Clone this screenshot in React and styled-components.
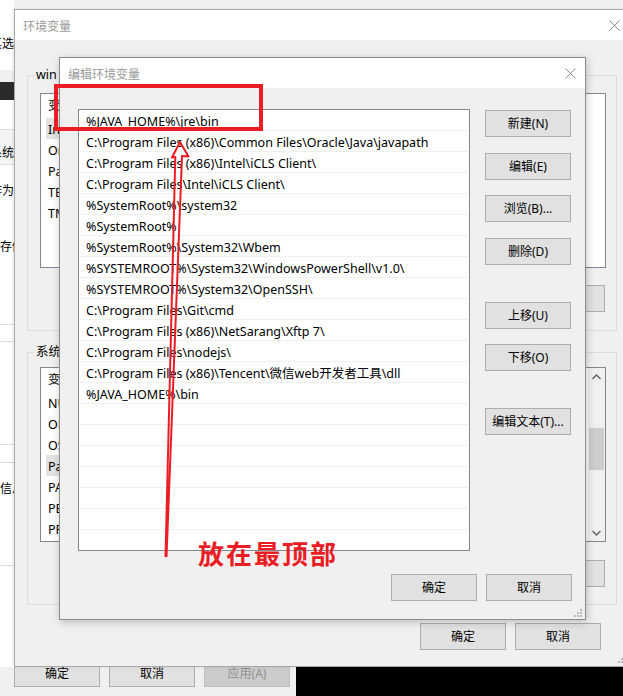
import React from 'react';
import styled, { createGlobalStyle } from 'styled-components';

const GlobalStyle = createGlobalStyle`
  html, body {
    margin: 0;
    padding: 0;
    background: #f0f0f0;
  }
  body {
    font-family: "Noto Sans", "Noto Sans CJK SC", sans-serif;
    font-size: 12px;
    color: #000;
  }
  * {
    box-sizing: border-box;
  }
`;

const Screen = styled.div`
  position: relative;
  width: 623px;
  height: 696px;
  overflow: hidden;
  display: flex;
  flex-direction: column;
  background: #f0f0f0;
`;

const Desk = styled.div`
  display: flex;
  height: 667px;
  flex-shrink: 0;
`;

// strip of the window lying behind, only 14px of it shows
const Strip = styled.div`
  width: 14px;
  flex-shrink: 0;
  display: flex;
  flex-direction: column;
  background: #fff;
  overflow: hidden;
`;

const StripCell = styled.div`
  height: ${p => p.$h}px;
  flex-shrink: 0;
  background: ${p => p.$bg || 'transparent'};
  border-bottom: ${p => (p.$line ? '1px solid #dcdcdc' : 'none')};
  padding-top: ${p => p.$top || 0}px;
  display: flex;
  justify-content: ${p => (p.$right ? 'flex-end' : 'flex-start')};
  align-items: flex-start;
  overflow: hidden;
  font-family: "Noto Sans CJK SC", sans-serif;
  line-height: 14px;
  span {
    flex-shrink: 0;
    white-space: nowrap;
  }
`;

const EnvWindow = styled.div`
  position: relative;
  margin-top: 9px;
  width: 617px;
  height: 658px;
  flex-shrink: 0;
  border: 1px solid #a8a8a8;
  background: #f0f0f0;
  display: flex;
  flex-direction: column;
  box-shadow: -1px 0 3px rgba(0, 0, 0, 0.1);
`;

const TitleBar = styled.div`
  height: 30px;
  flex-shrink: 0;
  background: #fff;
  display: flex;
  align-items: center;
  justify-content: space-between;
  padding: 0 ${p => p.$padRight}px 0 8px;
  color: #9a9a9a;
  font-family: "Noto Sans CJK SC", sans-serif;
`;

const CloseIcon = () => (
  <svg width="11" height="11" viewBox="0 0 11 11">
    <path d="M0.5 0.5 L10.5 10.5 M10.5 0.5 L0.5 10.5" stroke="#8a8a8a" strokeWidth="1" />
  </svg>
);

const EnvBody = styled.div`
  flex: 1;
  display: flex;
  flex-direction: column;
  padding: 27px 13px 16px 12px;
`;

const Group = styled.fieldset`
  margin: ${p => p.$top}px 0 0 0;
  padding: 0;
  border: 1px solid #dcdcdc;
  min-inline-size: 0;
`;

const GroupTitle = styled.legend`
  margin-left: 6px;
  padding: 0 2px;
  line-height: 16px;
  font-size: 12.5px;
  font-family: "Noto Sans", "Noto Sans CJK SC", sans-serif;
`;

const GroupBody = styled.div`
  padding: ${p => p.$padTop}px 10px ${p => p.$padBottom}px 12px;
  display: flex;
  flex-direction: column;
`;

const VarList = styled.div`
  height: 175px;
  display: flex;
  background: #fff;
  border: 1px solid #828790;
  overflow: hidden;
`;

const VarRows = styled.div`
  flex: 1;
  display: flex;
  flex-direction: column;
`;

const VarRow = styled.div`
  height: ${p => (p.$head ? 24 : 21)}px;
  flex-shrink: 0;
  margin-left: 5px;
  width: 180px;
  padding: 3px 0 0 2px;
  font-size: 12.5px;
  line-height: 17px;
  white-space: nowrap;
  overflow: hidden;
  background: ${p => (p.$selected ? '#e3e3e3' : 'transparent')};
`;

const ScrollBar = styled.div`
  width: 17px;
  flex-shrink: 0;
  display: flex;
  flex-direction: column;
  background: #f0f0f0;
`;

const ScrollArrow = styled.div`
  height: 17px;
  display: flex;
  align-items: center;
  justify-content: center;
`;

const ScrollTrack = styled.div`
  flex: 1;
  padding: 43px 1px 0;
`;

const Thumb = styled.div`
  height: 42px;
  background: #cdcdcd;
`;

const Chevron = ({ down }) => (
  <svg width="9" height="6" viewBox="0 0 9 6">
    <path d={down ? 'M0.5 1 L4.5 5 L8.5 1' : 'M0.5 5 L4.5 1 L8.5 5'} fill="none" stroke="#606060" strokeWidth="1.3" />
  </svg>
);

const ButtonRow = styled.div`
  display: flex;
  justify-content: flex-end;
  gap: 9px;
  margin-top: ${p => p.$top}px;
  padding-right: ${p => p.$right || 0}px;
`;

const Btn = styled.button`
  width: 86px;
  height: 27px;
  flex-shrink: 0;
  margin: ${p => p.$mt || 0}px 0 0 0;
  padding: 0;
  background: ${p => (p.disabled ? '#cccccc' : '#e1e1e1')};
  border: 1px solid ${p => (p.disabled ? '#bfbfbf' : '#adadad')};
  color: ${p => (p.disabled ? '#8f8f8f' : '#000')};
  font-family: "Noto Sans", "Noto Sans CJK SC", sans-serif;
  font-size: 12px;
  line-height: 25px;
  text-align: center;
`;

const Grip = styled.svg`
  position: absolute;
  right: ${p => p.$right}px;
  bottom: ${p => p.$bottom}px;
`;

const GripIcon = ({ right, bottom }) => (
  <Grip $right={right} $bottom={bottom} width="8" height="8" viewBox="0 0 8 8">
    <g fill="#b9b9b9">
      <rect x="6" y="0" width="2" height="2" />
      <rect x="3" y="3" width="2" height="2" />
      <rect x="6" y="3" width="2" height="2" />
      <rect x="0" y="6" width="2" height="2" />
      <rect x="3" y="6" width="2" height="2" />
      <rect x="6" y="6" width="2" height="2" />
    </g>
  </Grip>
);

const Taskbar = styled.div`
  display: flex;
  height: 29px;
  flex-shrink: 0;
  overflow: hidden;
`;

const BackButtons = styled.div`
  display: flex;
  gap: 9px;
  padding-left: 14px;
  width: 296px;
  flex-shrink: 0;
  align-items: flex-start;
  & > button {
    margin-top: -7px;
  }
`;

const Blackout = styled.div`
  flex: 1;
  background: #000;
`;

/* the edit dialog sits over the environment window */
const EditDialog = styled.div`
  position: absolute;
  left: 59px;
  top: 57px;
  width: 527px;
  height: 563px;
  display: flex;
  flex-direction: column;
  background: #f0f0f0;
  border: 1px solid #8c8c8c;
  box-shadow: 1px 2px 8px rgba(0, 0, 0, 0.22);
`;

const EditBody = styled.div`
  flex: 1;
  display: flex;
  flex-direction: column;
  padding: 21px 13px 18px 18px;
`;

const EditMain = styled.div`
  display: flex;
  gap: 15px;
`;

const PathList = styled.div`
  width: 392px;
  height: 442px;
  display: flex;
  flex-direction: column;
  background: #fff;
  border: 1px solid #828790;
  overflow: hidden;
`;

const PathRow = styled.div`
  height: 21px;
  flex-shrink: 0;
  padding: 3px 0 0 7px;
  font-size: 12.5px;
  line-height: 17px;
  white-space: nowrap;
  border-bottom: 1px solid #f0f0f0;
`;

const SideButtons = styled.div`
  display: flex;
  flex-direction: column;
`;

const Markup = styled.svg`
  position: absolute;
  left: 0;
  top: 0;
  pointer-events: none;
`;

const Callout = styled.div`
  position: absolute;
  left: 198px;
  top: 539px;
  font-family: "Noto Sans CJK SC", sans-serif;
  font-weight: 700;
  font-size: 26px;
  line-height: 28px;
  letter-spacing: 2px;
  color: #ec1c24;
  white-space: nowrap;
`;

const stripCells = [
  { h: 70, text: '其选', top: 36, right: true },
  { h: 12, bg: '#f0f0f0' },
  { h: 18, bg: '#2b2b2b' },
  { h: 30, line: true },
  { h: 35, bg: '#f4f4f4', text: '系统', top: 15, right: true, line: true },
  { h: 60, text: '作为', top: 18, right: true },
  { h: 100, text: '存储', top: 14, line: true },
  { h: 17, line: true },
  { h: 103, line: true },
  { h: 18, line: true },
  { h: 103, text: '信息', top: 18, line: true },
  { h: 100 },
];

const userVars = ['IntelliJ IDEA', 'OneDrive', 'Path', 'TEMP', 'TMP'];
const sysVars = ['NUMBER_OF_PROCESSORS', 'ONEAPI_ROOT', 'OS', 'Path', 'PATHEXT', 'PERL5LIB', 'PROCESSOR_ARCHITECTURE'];

const paths = [
  '%JAVA_HOME%\\jre\\bin',
  'C:\\Program Files (x86)\\Common Files\\Oracle\\Java\\javapath',
  'C:\\Program Files (x86)\\Intel\\iCLS Client\\',
  'C:\\Program Files\\Intel\\iCLS Client\\',
  '%SystemRoot%\\system32',
  '%SystemRoot%',
  '%SystemRoot%\\System32\\Wbem',
  '%SYSTEMROOT%\\System32\\WindowsPowerShell\\v1.0\\',
  '%SYSTEMROOT%\\System32\\OpenSSH\\',
  'C:\\Program Files\\Git\\cmd',
  'C:\\Program Files (x86)\\NetSarang\\Xftp 7\\',
  'C:\\Program Files\\nodejs\\',
  'C:\\Program Files (x86)\\Tencent\\微信web开发者工具\\dll',
  '%JAVA_HOME%\\bin',
];

const sideButtons = [
  { label: '新建(N)', mt: 1 },
  { label: '编辑(E)', mt: 16 },
  { label: '浏览(B)...', mt: 15 },
  { label: '删除(D)', mt: 16 },
  { label: '上移(U)', mt: 37 },
  { label: '下移(O)', mt: 15 },
  { label: '编辑文本(T)...', mt: 37 },
];

const App = () => {
  const rows = [...paths];
  while (rows.length < 21) rows.push('');

  return (
    <Screen>
      <GlobalStyle />
      <Desk>
        <Strip>
          {stripCells.map((c, i) => (
            <StripCell key={i} $h={c.h} $bg={c.bg} $line={c.line} $top={c.top} $right={c.right}>
              {c.text && <span>{c.text}</span>}
            </StripCell>
          ))}
        </Strip>

        <EnvWindow>
          <TitleBar $padRight={10}>
            <span>环境变量</span>
            <CloseIcon />
          </TitleBar>
          <EnvBody>
            <Group $top={0}>
              <GroupTitle>win 的用户变量(U)</GroupTitle>
              <GroupBody $padTop={10} $padBottom={18}>
                <VarList>
                  <VarRows>
                    <VarRow $head>变量</VarRow>
                    {userVars.map((v, i) => (
                      <VarRow key={v} $selected={i === 0}>{v}</VarRow>
                    ))}
                  </VarRows>
                </VarList>
                <ButtonRow $top={17} $right={1}>
                  <Btn>新建(N)...</Btn>
                  <Btn>编辑(E)...</Btn>
                  <Btn>删除(D)</Btn>
                </ButtonRow>
              </GroupBody>
            </Group>

            <Group $top={13}>
              <GroupTitle>系统变量(S)</GroupTitle>
              <GroupBody $padTop={7} $padBottom={17}>
                <VarList>
                  <VarRows>
                    <VarRow $head>变量</VarRow>
                    {sysVars.map((v, i) => (
                      <VarRow key={v} $selected={i === 3}>{v}</VarRow>
                    ))}
                  </VarRows>
                  <ScrollBar>
                    <ScrollArrow><Chevron /></ScrollArrow>
                    <ScrollTrack><Thumb /></ScrollTrack>
                    <ScrollArrow><Chevron down /></ScrollArrow>
                  </ScrollBar>
                </VarList>
                <ButtonRow $top={18} $right={1}>
                  <Btn>新建(W)...</Btn>
                  <Btn>编辑(I)...</Btn>
                  <Btn>删除(L)</Btn>
                </ButtonRow>
              </GroupBody>
            </Group>

            <ButtonRow $top={18} $right={16}>
              <Btn>确定</Btn>
              <Btn>取消</Btn>
            </ButtonRow>
          </EnvBody>
          <GripIcon right={4} bottom={3} />
        </EnvWindow>
      </Desk>

      <Taskbar>
        <BackButtons>
          <Btn>确定</Btn>
          <Btn>取消</Btn>
          <Btn disabled>应用(A)</Btn>
        </BackButtons>
        <Blackout />
      </Taskbar>

      <EditDialog>
        <TitleBar $padRight={9}>
          <span>编辑环境变量</span>
          <CloseIcon />
        </TitleBar>
        <EditBody>
          <EditMain>
            <PathList>
              {rows.map((p, i) => (
                <PathRow key={i}>{p}</PathRow>
              ))}
            </PathList>
            <SideButtons>
              {sideButtons.map(b => (
                <Btn key={b.label} $mt={b.mt}>{b.label}</Btn>
              ))}
            </SideButtons>
          </EditMain>
          <ButtonRow $top={23}>
            <Btn>确定</Btn>
            <Btn>取消</Btn>
          </ButtonRow>
        </EditBody>
        <GripIcon right={3} bottom={2} />
      </EditDialog>

      <Markup width="623" height="696" viewBox="0 0 623 696">
        <rect x="56" y="86" width="205" height="43" fill="none" stroke="#ec1c24" strokeWidth="4" />
        <path
          d="M165.5 557 L175.3 157 L172 157.5 L180 142 L188.5 156.5 L182 156 L166.5 557"
          fill="none"
          stroke="#ec1c24"
          strokeWidth="2"
          strokeLinejoin="round"
        />
      </Markup>
      <Callout>放在最顶部</Callout>
    </Screen>
  );
};

export default App;
